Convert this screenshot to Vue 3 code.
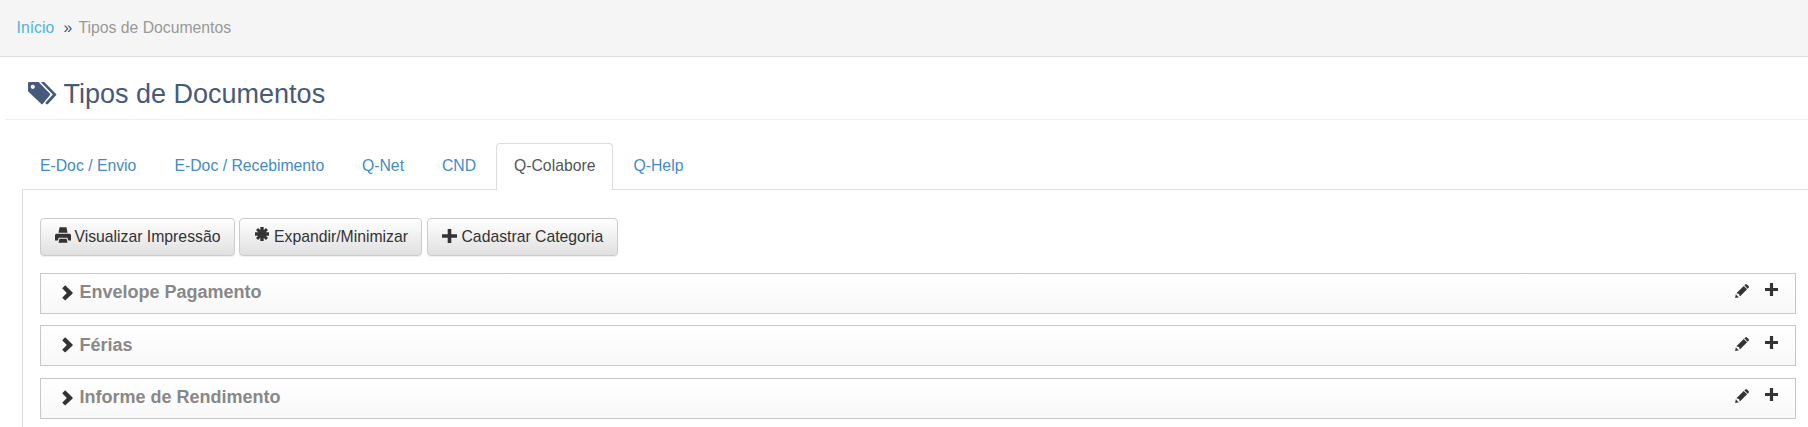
<script setup>
const tabs = [
  { label: 'E-Doc / Envio', cls: 'envio' },
  { label: 'E-Doc / Recebimento', cls: 'recebimento' },
  { label: 'Q-Net', cls: 'qnet' },
  { label: 'CND', cls: 'cnd' },
  { label: 'Q-Colabore', cls: 'active' },
  { label: 'Q-Help', cls: 'qhelp' },
]
const categories = ['Envelope Pagamento', 'Férias', 'Informe de Rendimento']
</script>

<template>
  <div class="page">
    <nav class="breadcrumb">
      <a class="home">Início</a>
      <span class="sep">»</span>
      <span class="current">Tipos de Documentos</span>
    </nav>

    <header class="title">
      <svg class="tags" width="29" height="23" viewBox="0 0 29 23">
        <path fill-rule="evenodd" d="M1.2 0H10.6L22 11.8Q22.5 12.4 22 13L14.6 22Q14 22.7 13.3 22.1L0 9.2V1.2Q0 0 1.2 0ZM4.8 2.7a2.1 2.1 0 1 0 0 4.2a2.1 2.1 0 1 0 0-4.2Z" />
        <path d="M12.8 0H16.2L28.1 12Q28.6 12.6 28.1 13.2L20 22Q19.2 22.7 18.3 22.1L17.2 20.9L24.8 12.6Z" />
      </svg>
      <h1>Tipos de Documentos</h1>
    </header>

    <ul class="tabs">
      <li v-for="t in tabs" :key="t.label" :class="t.cls">{{ t.label }}</li>
    </ul>

    <main class="panel">
      <div class="toolbar">
        <button class="btn print">
          <svg width="16" height="16" viewBox="0 0 16.5 16">
            <path d="M4.7 0H11.8L13 5.6H3.6ZM1.6 6.6H15Q16.5 6.6 16.5 8.2V13.8H13.6L12.8 10.8H3.8L3 13.8H0V8.2Q0 6.6 1.6 6.6ZM4.6 11.8H12L12.9 16H3.6Z" />
          </svg>
          <span>Visualizar Impressão</span>
        </button>
        <button class="btn expand">
          <svg width="14" height="14" viewBox="0 0 14 14">
            <path d="M5.3 0H8.7V3.2L10.9 1L13 3.1L10.8 5.3H14V8.7H10.8L13 10.9L10.9 13L8.7 10.8V14H5.3V10.8L3.1 13L1 10.9L3.2 8.7H0V5.3H3.2L1 3.1L3.1 1L5.3 3.2Z" />
          </svg>
          <span>Expandir/Minimizar</span>
        </button>
        <button class="btn add">
          <svg width="15" height="14" viewBox="0 0 15 14">
            <path d="M5.7 0H9.3V5.2H15V8.7H9.3V14H5.7V8.7H0V5.2H5.7Z" />
          </svg>
          <span>Cadastrar Categoria</span>
        </button>
      </div>

      <section v-for="c in categories" :key="c" class="row">
        <svg class="chevron" width="11" height="16" viewBox="0 0 11 16">
          <path d="M3.2 .3L10.6 7.4Q11 7.9 10.6 8.4L3.2 15.6L.2 12.7L4.8 7.9L.2 3.2Z" />
        </svg>
        <div class="content">
          <h2>{{ c }}</h2>
          <svg class="pencil" width="14" height="14" viewBox="0 0 14 14">
            <path d="M9.3 1.3L12.7 4.7L13.6 3.7Q14.3 2.9 13.6 2.1L11.9 .4Q11.1-.2 10.3 .4ZM8.7 1.9L12.1 5.3L4.9 12.6L4 10L1.4 9.2ZM.9 9.9L.1 13.9L4.1 13.2L3.2 12.7L1.4 10.9Z" />
          </svg>
          <svg class="plus" width="13" height="13" viewBox="0 0 13 13">
            <path d="M4.9 0H8.1V4.9H13V8.1H8.1V13H4.9V8.1H0V4.9H4.9Z" />
          </svg>
        </div>
      </section>
    </main>
  </div>
</template>

<style>
body {
  background: #fff;
  overflow: hidden;
}
</style>

<style scoped>
.page {
  height: 427px;
  overflow: hidden;
  font-family: "Liberation Sans", Arial, sans-serif;
  font-size: 15.75px;
  line-height: 22px;
  color: #333;
}
.page * {
  box-sizing: border-box;
}
svg {
  display: block;
  flex: none;
  fill: currentColor;
}
.breadcrumb {
  display: flex;
  height: 57px;
  padding: 17px 0 0 16.5px;
  background: #f5f5f5;
  border-bottom: 1px solid #ddd;
}
.home {
  width: 47px;
  color: #4fb3dc;
}
.sep {
  width: 15px;
  color: #475577;
}
.current {
  color: #999;
}
.title {
  display: flex;
  height: 63px;
  margin-left: 5px;
  padding: 25px 0 0 23px;
  border-bottom: 1px solid #eee;
  color: #475a7b;
}
h1 {
  margin: -4px 0 0 6.5px;
  font-size: 27px;
  line-height: 32px;
  font-weight: 400;
}
.tabs {
  display: flex;
  height: 47px;
  margin: 23px 0 -1px 22px;
  padding: 0;
  list-style: none;
  color: #428bca;
  position: relative;
}
.tabs li {
  padding: 12px 0 0 18px;
  height: 47px;
  white-space: nowrap;
}
.tabs .envio { width: 134.5px; }
.tabs .recebimento { width: 187.5px; }
.tabs .qnet { width: 80px; }
.tabs .cnd { width: 72px; }
.tabs .active {
  width: 117px;
  padding: 11px 0 0 17px;
  border: 1px solid #ddd;
  border-bottom: 0;
  border-radius: 4px 4px 0 0;
  background: #fff;
  color: #555;
}
.tabs .qhelp { padding-left: 20.5px; }
.panel {
  margin-left: 22px;
  height: 240px;
  padding: 28px 12px 0 17px;
  border: 1px solid #ddd;
  border-right: 0;
  border-bottom: 0;
}
.toolbar {
  display: flex;
  margin-bottom: 17px;
}
.btn {
  display: flex;
  height: 38px;
  padding: 8px 0 0 13px;
  border: 1px solid #ccc;
  border-radius: 4px;
  background: linear-gradient(#fff, #e0e0e0);
  box-shadow: 0 1px 1px rgba(0, 0, 0, 0.07);
  color: #333;
  font: inherit;
  white-space: nowrap;
  align-items: flex-start;
}
.btn span {
  line-height: 20px;
}
.print { width: 195px; margin-right: 4px; padding-left: 13.5px; }
.print span { margin-left: 4px; }
.expand { width: 183px; margin-right: 5px; padding-left: 15px; }
.expand span { margin-left: 5px; }
.add { width: 191px; padding-left: 13.5px; }
.add svg { margin-top: 2px; }
.add span { margin-left: 5px; }
.row {
  display: flex;
  height: 41px;
  margin-bottom: 11px;
  padding-left: 20.5px;
  border: 1px solid #c8c8c8;
  background: linear-gradient(#fff, #f8f8f8);
}
.row:nth-of-type(2) { margin-bottom: 12px; }
.row:nth-of-type(2) .content { padding-top: 1px; }
.chevron { margin-top: 11px; }
.content {
  display: flex;
  flex: 1;
}
h2 {
  flex: 1;
  margin: 7px 0 0 7px;
  font-size: 18px;
  line-height: 22px;
  color: #888;
}
.pencil { margin: 10px 16px 0 0; }
.plus { margin: 9px 17px 0 0; }
</style>
